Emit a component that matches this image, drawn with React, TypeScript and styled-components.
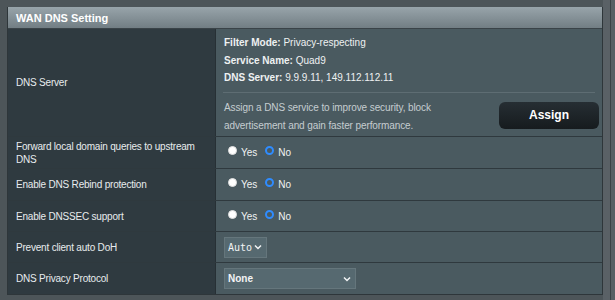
import React from 'react';
import styled, { createGlobalStyle } from 'styled-components';

const GlobalStyle = createGlobalStyle`
	html, body {
		margin: 0;
		padding: 0;
		background: #4d5559;
		font-family: 'Liberation Sans', Arial, sans-serif;
	}
`;

const Page = styled.div`
	width: 615px;
	height: 300px;
	box-sizing: border-box;
	padding: 7px 12px 0 7px;
	background: linear-gradient(to right, #4d5559 0, #4d5559 603px, #5a6166 603px, #5a6166 610px, #3c4347 610px, #3c4347 611px, #596065 611px);
`;

const Table = styled.div`
	width: 596px;
	border: 1px solid #2e363a;
	border-top: none;
	box-sizing: border-box;
	background: #4a5a60;
`;

const Header = styled.div`
	height: 22px;
	box-sizing: border-box;
	padding-left: 8px;
	display: flex;
	align-items: center;
	background: linear-gradient(to bottom, #98a4aa, #727e84);
	border-bottom: 1px solid #3a4348;
	color: #fff;
	font-size: 11px;
	font-weight: bold;
`;

const Row = styled.div<{ $h: number }>`
	display: grid;
	grid-template-columns: 208px 1fr;
	height: ${(p) => p.$h}px;
	box-sizing: border-box;
	border-bottom: 1px solid #2f393e;
	&:last-child {
		border-bottom: none;
	}
`;

const Label = styled.div`
	background: #2f3a40;
	color: #e8ecee;
	font-size: 10px;
	letter-spacing: -0.2px;
	line-height: 13px;
	padding: 0 8px;
	display: flex;
	align-items: center;
	border-right: 1px solid #273035;
`;

const Cell = styled.div`
	padding: 0 8px;
	display: flex;
	align-items: center;
	color: #f0f2f3;
	font-size: 10px;
`;

const InfoCell = styled.div`
	padding: 5px 3px 0 7px;
	display: flex;
	flex-direction: column;
`;

const InfoLine = styled.div`
	color: #eef1f2;
	font-size: 10px;
	line-height: 17.5px;
	padding-left: 1px;
	b {
		font-weight: bold;
	}
`;

const Divider = styled.div`
	height: 1px;
	background: #5e6d73;
	margin: 5px 4px 6px 0;
`;

const AssignRow = styled.div`
	display: flex;
	align-items: center;
	justify-content: space-between;
`;

const Hint = styled.div`
	color: #c5cdd0;
	font-size: 10px;
	letter-spacing: -0.1px;
	line-height: 18px;
	padding-left: 1px;
`;

const AssignButton = styled.button`
	width: 100px;
	height: 27px;
	border: none;
	border-radius: 6px;
	background: linear-gradient(to bottom, #262e33, #161b1e);
	color: #fff;
	font-family: 'Liberation Sans', Arial, sans-serif;
	font-weight: bold;
	font-size: 12px;
	margin-top: -3px;
`;

const RadioGroup = styled.div`
	display: flex;
	align-items: center;
	gap: 4px;
	padding-left: 4px;
`;

const RadioDot = styled.span<{ $on?: boolean }>`
	display: inline-block;
	width: 9px;
	height: 9px;
	border-radius: 50%;
	box-sizing: border-box;
	background: ${(p) => (p.$on ? '#4a5a60' : '#fff')};
	border: ${(p) => (p.$on ? '2px solid #2f8cff' : '1px solid #e0e0e0')};
	margin-top: -4px;
`;

const RadioText = styled.span`
	color: #f0f2f3;
	font-size: 10px;
	margin-right: 4px;
`;

const Select = styled.div<{ $w: number; $mono?: boolean }>`
	width: ${(p) => p.$w}px;
	height: 21px;
	box-sizing: border-box;
	background: #566970;
	border: 1px solid #65767c;
	display: flex;
	align-items: center;
	justify-content: space-between;
	padding: 0 4px 0 3px;
	color: #f2f4f5;
	font-size: 10px;
	font-family: ${(p) => (p.$mono ? "'DejaVu Sans Mono', monospace" : "'Liberation Sans', Arial, sans-serif")};
	font-weight: ${(p) => (p.$mono ? 'normal' : 'bold')};
`;

const Chevron = () => (
	<svg width="8" height="6" viewBox="0 0 8 6">
		<path d="M1 1.5 L4 4.5 L7 1.5" fill="none" stroke="#f2f4f5" strokeWidth="1.5" />
	</svg>
);

const YesNo = () => (
	<RadioGroup>
		<RadioDot />
		<RadioText>Yes</RadioText>
		<RadioDot $on />
		<RadioText>No</RadioText>
	</RadioGroup>
);

const App = () => {
	return (
		<>
			<GlobalStyle />
			<Page>
				<Table>
					<Header>WAN DNS Setting</Header>
					<Row $h={108}>
						<Label>DNS Server</Label>
						<InfoCell>
							<InfoLine>
								<b>Filter Mode:</b> Privacy-respecting
							</InfoLine>
							<InfoLine>
								<b>Service Name:</b> Quad9
							</InfoLine>
							<InfoLine>
								<b>DNS Server:</b> 9.9.9.11, 149.112.112.11
							</InfoLine>
							<Divider />
							<AssignRow>
								<Hint>
									Assign a DNS service to improve security, block
									<br />
									advertisement and gain faster performance.
								</Hint>
								<AssignButton>Assign</AssignButton>
							</AssignRow>
						</InfoCell>
					</Row>
					<Row $h={32}>
						<Label>
							Forward local domain queries to upstream
							<br />
							DNS
						</Label>
						<Cell>
							<YesNo />
						</Cell>
					</Row>
					<Row $h={32}>
						<Label>Enable DNS Rebind protection</Label>
						<Cell>
							<YesNo />
						</Cell>
					</Row>
					<Row $h={31}>
						<Label>Enable DNSSEC support</Label>
						<Cell>
							<YesNo />
						</Cell>
					</Row>
					<Row $h={31}>
						<Label>Prevent client auto DoH</Label>
						<Cell>
							<Select $w={43} $mono>
								Auto
								<Chevron />
							</Select>
						</Cell>
					</Row>
					<Row $h={31}>
						<Label>DNS Privacy Protocol</Label>
						<Cell>
							<Select $w={132}>
								None
								<Chevron />
							</Select>
						</Cell>
					</Row>
				</Table>
			</Page>
		</>
	);
};

export default App;
